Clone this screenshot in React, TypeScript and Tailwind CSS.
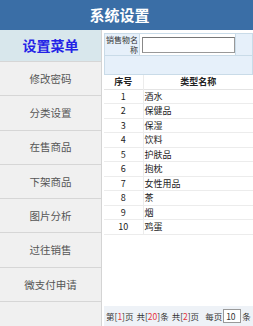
const menu = ["修改密码", "分类设置", "在售商品", "下架商品", "图片分析", "过往销售", "微支付申请"];

const rows = ["酒水", "保健品", "保湿", "饮料", "护肤品", "抱枕", "女性用品", "茶", "烟", "鸡蛋"];

export default function App() {
  return (
    <div
      className="flex h-[326px] w-[253px] flex-col overflow-hidden bg-white"
      style={{ fontFamily: '"Noto Sans CJK SC", "Liberation Sans", sans-serif' }}
    >
      {/* header */}
      <div className="flex h-[30px] shrink-0 items-center justify-center bg-[#3a6ea6] pr-[14px] text-[15px] font-bold text-white">
        系统设置
      </div>

      <div className="flex flex-1 overflow-hidden">
        {/* sidebar */}
        <div className="flex w-[102px] shrink-0 flex-col border-r border-[#d4d4d4] bg-[#f0f0f0]">
          <div className="flex h-[31px] items-center justify-center bg-[#d8e7ec] text-[14px] font-bold text-[#2323e6]">
            设置菜单
          </div>
          {menu.map((m) => (
            <div
              key={m}
              className="flex h-[34.3px] items-center justify-center border-t border-[#d6d6d6] text-[10.5px] text-[#555]"
            >
              {m}
            </div>
          ))}
          <div className="border-t border-[#d6d6d6]" />
        </div>

        {/* content */}
        <div className="flex min-w-0 flex-1 flex-col pl-[2px] pt-[3px]">
          <div className="flex h-[23px] border border-[#c9dbe8] bg-[#e6f0fa]">
            <div className="flex w-[35px] flex-col items-end justify-center border-r border-[#c9dbe8] pr-[1px] text-[8px] leading-[10px] text-[#333]">
              <span>销售物名</span>
              <span>称</span>
            </div>
            <div className="flex w-[96px] items-center border-r border-[#c9dbe8] bg-white pl-[2px]">
              <div className="h-[16px] w-[93px] border border-[#999] border-t-[#777] border-l-[#888] bg-white" />
            </div>
            <div className="flex-1" />
          </div>
          <div className="h-[19px] border border-t-0 border-[#c9dbe8] bg-[#e6f0fa]" />

          <table className="w-full border-collapse text-[9px] text-[#222]">
            <thead>
              <tr className="h-[14px] border-b border-[#e4e4e4]">
                <th className="w-[39px] border-r border-[#ececec] font-bold">序号</th>
                <th className="font-bold">类型名称</th>
              </tr>
            </thead>
            <tbody>
              {rows.map((r, i) => (
                <tr key={r} className="h-[14.3px] border-b border-[#ececec]">
                  <td className="border-r border-[#ececec] text-center">{i + 1}</td>
                  <td className="pl-[1px]">{r}</td>
                </tr>
              ))}
            </tbody>
          </table>

          <div className="mt-auto flex h-[20px] items-center gap-[3px] overflow-hidden whitespace-nowrap bg-[#eef2f7] pl-[2px] text-[8.5px] text-[#333]">
            <span className="shrink-0">
              第[<span className="text-[#e8323c]">1</span>]页
            </span>
            <span className="shrink-0">
              共[<span className="text-[#e8323c]">20</span>]条
            </span>
            <span className="shrink-0">
              共[<span className="text-[#e8323c]">2</span>]页
            </span>
            <span className="ml-[3px] flex shrink-0 items-center">
              每页
              <span className="mx-[1px] flex h-[14px] w-[18px] items-center border border-[#999] bg-white pl-[2px]">
                10
              </span>
              条
            </span>
          </div>
        </div>
      </div>
    </div>
  );
}
